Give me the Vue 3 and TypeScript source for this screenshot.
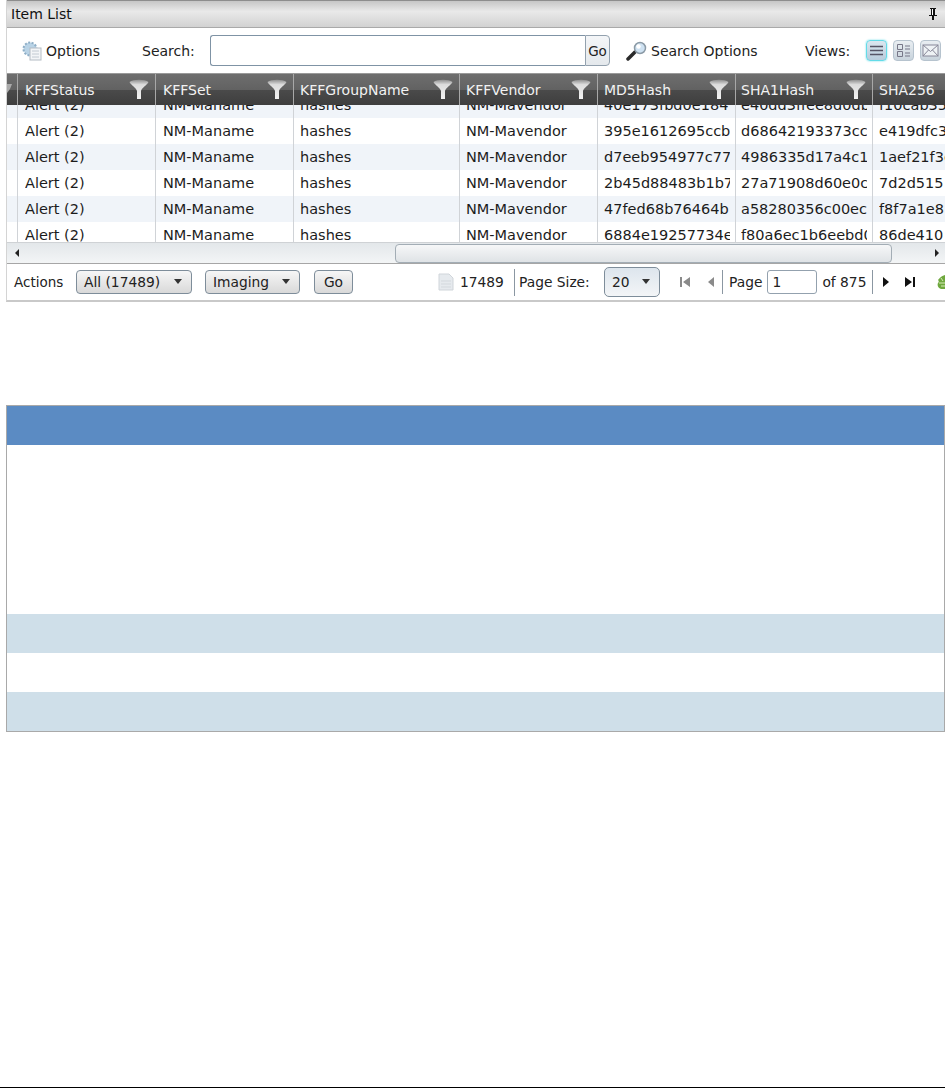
<script setup lang="ts">
interface Row { md5: string; sha1: string; sha256: string }
const rows: Row[] = [
  { md5: '40e173fbd0e184', sha1: 'e40dd3ffee8d0db', sha256: 'f10cab35c' },
  { md5: '395e1612695ccb', sha1: 'd68642193373cc', sha256: 'e419dfc3c' },
  { md5: 'd7eeb954977c77', sha1: '4986335d17a4c1', sha256: '1aef21f3c' },
  { md5: '2b45d88483b1b7', sha1: '27a71908d60e0c', sha256: '7d2d515' },
  { md5: '47fed68b76464b', sha1: 'a58280356c00ec', sha256: 'f8f7a1e8' },
  { md5: '6884e19257734e', sha1: 'f80a6ec1b6eebd0', sha256: '86de410' },
]
const columns = ['KFFStatus', 'KFFSet', 'KFFGroupName', 'KFFVendor', 'MD5Hash', 'SHA1Hash', 'SHA256']
</script>

<template>
  <div class="page">
    <section class="widget">
      <header class="title">
        <span>Item List</span>
        <svg class="pin" width="10" height="14" viewBox="0 0 10 14"><path d="M2 1h6v1H7v6h2v1H6v4H4V9H1V8h2V2H2z" fill="#111"/><rect x="4" y="2" width="1" height="6" fill="#fff"/></svg>
      </header>
      <div class="toolbar">
        <svg class="opt" width="22" height="22" viewBox="0 0 22 22">
          <circle cx="9" cy="9" r="6.5" fill="#b9d3e6" stroke="#8eaec6" stroke-dasharray="2 1.5" stroke-width="2"/>
          <rect x="9" y="8" width="11" height="12" fill="#f3f5f7" stroke="#b4bcc4"/>
          <path d="M11 11h7M11 14h7M11 17h7" stroke="#c2cad2"/>
        </svg>
        <span class="opt-label">Options</span>
        <span class="search-label">Search:</span>
        <div class="search">
          <input class="search-input" type="text" />
          <button class="search-go">Go</button>
        </div>
        <svg class="mag" width="22" height="22" viewBox="0 0 22 22">
          <path d="M2 19l7-7" stroke="#2a2a2a" stroke-width="3.5" stroke-linecap="round"/>
          <circle cx="14" cy="8" r="5.5" fill="#cfe2f2" stroke="#8b9aa6" stroke-width="1.5"/>
          <circle cx="12.5" cy="6.5" r="2.2" fill="#fff"/>
        </svg>
        <span class="search-opt">Search Options</span>
        <span class="views">Views:</span>
        <span class="view active">
          <svg width="15" height="13" viewBox="0 0 15 13"><path d="M1 2.500h13M1 6.500h13M1 10.500h13" stroke="#556" stroke-width="1.7"/></svg>
        </span>
        <span class="view">
          <svg width="15" height="15" viewBox="0 0 15 15"><path d="M1.500 1.500h5v5h-5zM1.500 8.500h5v5h-5z" fill="none" stroke="#778"/><path d="M9 3h5M9 6h5M9 10h5M9 13h5" stroke="#778" stroke-width="1.2"/></svg>
        </span>
        <span class="view">
          <svg width="17" height="13" viewBox="0 0 17 13"><rect x="1" y="1" width="15" height="11" fill="#eef2f5" stroke="#889"/><path d="M1 1l7.500 6.500L16 1M1 12l5.500-6M16 12l-5.500-6" fill="none" stroke="#889"/></svg>
        </span>
      </div>

      <div class="grid">
        <div class="head">
          <div class="stub">
            <svg class="stub-funnel" width="5" height="9" viewBox="0 0 5 9"><path d="M0 0h5L3 5 0 9z" fill="#aaa"/></svg>
          </div>
          <div v-for="c in columns" :key="c" class="hcell">
            <span>{{ c }}</span>
            <svg class="funnel" width="20" height="21" viewBox="0 0 20 21">
              <defs>
                <linearGradient id="fg" x1="0" y1="0" x2="0" y2="1"><stop offset="0" stop-color="#8f8f8f"/><stop offset=".25" stop-color="#dcdcdc"/><stop offset="1" stop-color="#f2f2f2"/></linearGradient>
              </defs>
              <path d="M0.500 3C4 0 16 0 19.500 3C18 6 12.500 9 12 12V20H8V12C7.500 9 2 6 0.500 3z" fill="url(#fg)"/>
            </svg>
          </div>
        </div>
        <div class="body">
          <div v-for="(r, i) in rows" :key="i" class="row" :class="{ alt: i % 2 === 0 }">
            <div class="stub"></div>
            <div class="cell"><span>Alert (2)</span></div>
            <div class="cell"><span>NM-Maname</span></div>
            <div class="cell"><span>hashes</span></div>
            <div class="cell"><span>NM-Mavendor</span></div>
            <div class="cell"><span>{{ r.md5 }}</span></div>
            <div class="cell"><span>{{ r.sha1 }}</span></div>
            <div class="cell"><span>{{ r.sha256 }}</span></div>
          </div>
        </div>
      </div>

      <div class="scrollbar">
        <span class="arrow-left"></span>
        <div class="thumb"></div>
        <span class="arrow-right"></span>
      </div>

      <div class="footer">
        <span class="actions">Actions</span>
        <span class="select all">All (17489)<i class="caret"></i></span>
        <span class="select imaging">Imaging<i class="caret"></i></span>
        <button class="btn-go">Go</button>
        <svg class="doc" width="16" height="18" viewBox="0 0 16 18"><path d="M1 1h10l4 4v12H1z" fill="#e6eaee" stroke="#d0d5da"/><path d="M3 8h10M3 11h10M3 14h10" stroke="#d3d8dd"/></svg>
        <span class="count">17489</span>
        <span class="sep"></span>
        <span class="psl">Page Size:</span>
        <span class="select size">20<i class="caret"></i></span>
        <svg class="nav first" width="12" height="12" viewBox="0 0 12 12"><path d="M1 1h2v10H1zM11 1v10L4 6z" fill="#8a8a8a"/></svg>
        <svg class="nav prev" width="8" height="12" viewBox="0 0 8 12"><path d="M7 1v10L1 6z" fill="#8a8a8a"/></svg>
        <span class="sep s2"></span>
        <span class="pl">Page</span>
        <input class="page-input" type="text" value="1" />
        <span class="of">of 875</span>
        <span class="sep s3"></span>
        <svg class="nav next" width="8" height="12" viewBox="0 0 8 12"><path d="M1 1v10l6-5z" fill="#111"/></svg>
        <svg class="nav last" width="12" height="12" viewBox="0 0 12 12"><path d="M1 1v10l7-5zM9 1h2v10H9z" fill="#111"/></svg>
        <svg class="leaf" width="10" height="16" viewBox="0 0 10 16"><path d="M10 1C6 2 5 4 3 6c1 1 1 2 0 3-1 2 0 5 3 6h4z" fill="#6fa83e"/><path d="M6 4l2 3M4 9h6M6 12h4" stroke="#d7e9b8"/></svg>
      </div>
    </section>

    <section class="panel">
      <div class="p-head"></div>
      <div class="p-big"></div>
      <div class="p-row tint"></div>
      <div class="p-row"></div>
      <div class="p-row tint"></div>
    </section>

    <div class="rule"></div>
  </div>
</template>

<style>
html, body { margin: 0; padding: 0; background: #fff; overflow: hidden; }
</style>

<style scoped>
.page {
  width: 945px;
  height: 1088px;
  display: flex;
  flex-direction: column;
  font-family: "DejaVu Sans", Verdana, sans-serif;
  font-size: 13.8px;
  color: #222;
  overflow: hidden;
  box-sizing: border-box;
}
.widget {
  margin-left: 6px;
  width: 939px;
  height: 302px;
  display: flex;
  flex-direction: column;
  flex: none;
  overflow: hidden;
  box-sizing: border-box;
  border-left: 1px solid #d4d4d4;
  border-bottom: 2px solid #c9c9c9;
}
.title {
  flex: none;
  height: 28px;
  box-sizing: border-box;
  border-top: 1px solid #8d8d8d;
  border-bottom: 1px solid #a9a9a9;
  background: linear-gradient(#c6c6c6, #e9e9e9 40%, #d2d2d2);
  display: flex;
  align-items: center;
  justify-content: space-between;
  padding: 0 7px 0 4px;
  font-size: 14px;
  color: #111;
}
.toolbar {
  flex: none;
  height: 45px;
  display: flex;
  align-items: center;
  background: #fff;
  font-size: 14px;
}
.toolbar > *, .footer > * { flex: none; }
.opt { margin-left: 14px; }
.opt-label { margin-left: 3px; width: 96px; }
.search-label { width: 68px; }
.search { display: flex; width: 400px; height: 31px; }
.search-input {
  flex: 1;
  min-width: 0;
  box-sizing: border-box;
  border: 1px solid #7f93a5;
  border-right: none;
  border-radius: 3px 0 0 3px;
  background: #fff;
  outline: none;
}
.search-go {
  width: 25px;
  padding: 0;
  font: inherit;
  font-size: 13.5px;
  color: #222;
  border: 1px solid #93a1ae;
  border-radius: 0 4px 4px 0;
  background: linear-gradient(#f4f6f8, #e4e8ec);
}
.mag { margin-left: 16px; }
.search-opt { margin-left: 3px; width: 154px; }
.views { width: 61px; }
.view {
  width: 21px;
  height: 21px;
  margin-right: 6px;
  box-sizing: border-box;
  border: 1px solid #b6c3ce;
  border-radius: 4px;
  background: linear-gradient(#e9eef2, #c8d3dc);
  display: flex;
  align-items: center;
  justify-content: center;
}
.view.active { border-color: #63dbe8; box-shadow: 0 0 2px #63dbe8; background: linear-gradient(#dbe7f0, #b8ccdc); }
.grid {
  flex: none;
  height: 169px;
  overflow: hidden;
  position: relative;
}
.head {
  height: 32px;
  display: flex;
  position: relative;
  z-index: 1;
  background: linear-gradient(#6e6e6e 0, #626262 50%, #4a4a4a 52%, #3e3e3e 100%);
  border-top: 1px solid #9a9a9a;
  box-sizing: border-box;
  width: 1100px;
}
.stub { flex: none; width: 11px; box-sizing: border-box; }
.head .stub { border-right: 1px solid #a8a8a8; display: flex; justify-content: flex-end; padding: 10px 5px 0 0; }
.stub-funnel { flex: none; }
.hcell {
  flex: none;
  width: 138px;
  box-sizing: border-box;
  border-right: 1px solid #a8a8a8;
  padding: 0 6px 0 7px;
  display: flex;
  align-items: center;
  justify-content: space-between;
  color: #f2f2f2;
  font-size: 14px;
}
.hcell:nth-child(n+4) { padding-left: 6px; }
.hcell:nth-child(4) { width: 166px; }
.hcell:nth-child(7) { padding-left: 5px; }
.hcell:nth-child(n+7) { width: 137px; }
.funnel { flex: none; }
.body { margin-top: -13px; width: 1100px; }
.row { display: flex; height: 26px; background: #fff; }
.row.alt { background: #f0f4f9; }
.row .stub { border-right: 1px solid #d0d3d7; }
.cell {
  flex: none;
  width: 138px;
  box-sizing: border-box;
  border-right: 1px solid #d0d3d7;
  padding: 0 5px 0 7px;
  line-height: 26px;
  font-size: 14.5px;
  color: #1c1c1c;
}
.cell span { display: block; white-space: nowrap; overflow: hidden; }
.cell:nth-child(n+4) { padding-left: 6px; }
.cell:nth-child(4) { width: 166px; }
.cell:nth-child(7) { padding-left: 5px; }
.cell:nth-child(n+7) { width: 137px; }
.scrollbar {
  flex: none;
  height: 22px;
  box-sizing: border-box;
  border-top: 1px solid #cfd2d5;
  border-bottom: 1px solid #a6a6a6;
  background: linear-gradient(#e3e7ea, #f3f5f6);
  display: flex;
  align-items: center;
  padding: 0 3px 0 8px;
}
.arrow-left { width: 0; height: 0; border: 4px solid transparent; border-right-color: #222; border-left-width: 0; }
.arrow-right { width: 0; height: 0; border: 4px solid transparent; border-left-color: #222; border-right-width: 0; }
.thumb {
  margin-left: 376px;
  width: 497px;
  height: 19px;
  box-sizing: border-box;
  border: 1px solid #a3adb5;
  border-radius: 4px;
  background: linear-gradient(#f6f7f8, #dfe3e6);
  margin-right: 43px;
}
.footer {
  flex: 1;
  display: flex;
  align-items: center;
  background: #fff;
}
.actions { margin-left: 7px; width: 62px; font-size: 13.5px; }
.select {
  box-sizing: border-box;
  height: 24px;
  border: 1px solid #7e8d9a;
  border-radius: 4px;
  background: linear-gradient(#f6f6f6, #d9d9d9);
  display: flex;
  align-items: center;
  padding-left: 7px;
  position: relative;
  white-space: nowrap;
}
.caret { width: 0; height: 0; border: 4px solid transparent; border-top: 5px solid #333; border-bottom-width: 0; position: absolute; right: 9px; top: 8px; }
.all { width: 116px; }
.imaging { width: 95px; margin-left: 13px; }
.btn-go {
  width: 39px;
  height: 24px;
  margin-left: 14px;
  padding: 0;
  font: inherit;
  color: #222;
  border: 1px solid #7e8d9a;
  border-radius: 4px;
  background: linear-gradient(#f6f6f6, #d9d9d9);
}
.doc { margin-left: 85px; }
.count { margin-left: 6px; width: 54px; }
.sep { width: 1px; height: 27px; background: #8b97a2; }
.psl { margin-left: 4px; width: 85px; white-space: nowrap; }
.size { width: 56px; height: 30px; padding-left: 7px; border-radius: 5px; background: linear-gradient(#dde5ed, #f3f5f7); }
.size .caret { top: 11px; }
.first { margin-left: 19px; }
.prev { margin-left: 16px; }
.s2 { margin-left: 7px; height: 24px; }
.pl { margin-left: 6px; }
.page-input {
  width: 50px;
  height: 24px;
  box-sizing: border-box;
  margin-left: 5px;
  padding: 0 4px;
  font: inherit;
  color: #222;
  border: 1px solid #93a1ae;
  border-radius: 3px;
  outline: none;
}
.of { margin-left: 5px; white-space: nowrap; }
.s3 { margin-left: 6px; height: 24px; }
.next { margin-left: 9px; }
.last { margin-left: 14px; }
.leaf { margin-left: 19px; }
.panel {
  flex: none;
  margin: 103px 0 0 6px;
  width: 939px;
  height: 327px;
  box-sizing: border-box;
  border: 1px solid #a9a9a9;
  display: flex;
  flex-direction: column;
  background: #fff;
}
.p-head { flex: none; height: 39px; background: #5b8bc3; }
.p-big { flex: none; height: 169px; }
.p-row { flex: none; height: 39px; }
.tint { background: #cfdfe9; }
.rule { margin-top: auto; height: 1px; background: #000; flex: none; }
</style>
